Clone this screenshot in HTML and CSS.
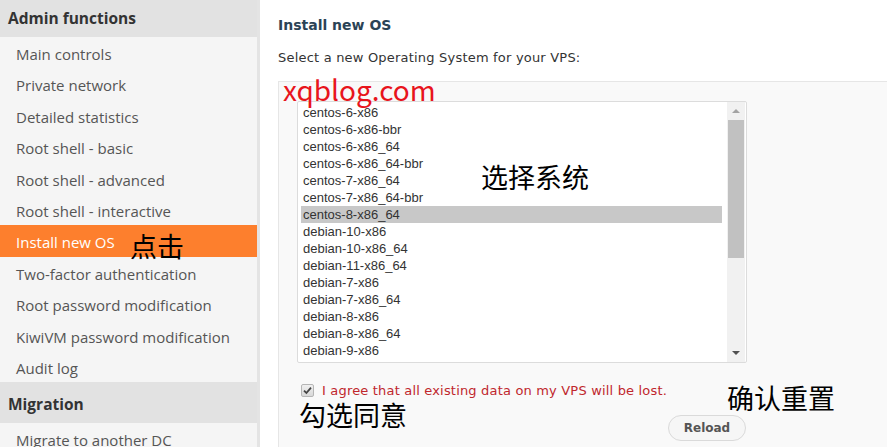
FILE: index.html
```html
<!DOCTYPE html>
<html>
<head>
<meta charset="utf-8">
<link rel="stylesheet" href="styles.css">
</head>
<body>
<div class="page">
  <aside class="sidebar">
    <div class="side-head">Admin functions</div>
    <ul class="side-list">
      <li>Main controls</li>
      <li>Private network</li>
      <li>Detailed statistics</li>
      <li>Root shell - basic</li>
      <li>Root shell - advanced</li>
      <li>Root shell - interactive</li>
      <li class="active">Install new OS<span class="note note-click">点击</span></li>
      <li>Two-factor authentication</li>
      <li>Root password modification</li>
      <li>KiwiVM password modification</li>
      <li>Audit log</li>
    </ul>
    <div class="side-head side-head2">Migration</div>
    <ul class="side-list">
      <li>Migrate to another DC</li>
    </ul>
  </aside>
  <main class="main">
    <h2 class="title">Install new OS</h2>
    <p class="lead">Select a new Operating System for your VPS:</p>
    <div class="panel">
      <span class="watermark">xqblog.com</span>
      <div class="listbox">
        <ul class="options">
          <li>centos-6-x86</li>
          <li>centos-6-x86-bbr</li>
          <li>centos-6-x86_64</li>
          <li>centos-6-x86_64-bbr</li>
          <li>centos-7-x86_64</li>
          <li>centos-7-x86_64-bbr</li>
          <li class="sel">centos-8-x86_64</li>
          <li>debian-10-x86</li>
          <li>debian-10-x86_64</li>
          <li>debian-11-x86_64</li>
          <li>debian-7-x86</li>
          <li>debian-7-x86_64</li>
          <li>debian-8-x86</li>
          <li>debian-8-x86_64</li>
          <li>debian-9-x86</li>
          <li>debian-9-x86_64</li>
          <li>fedora-27-x86_64</li>
          <li>ubuntu-14.04-x86</li>
          <li>ubuntu-14.04-x86_64</li>
          <li>ubuntu-16.04-x86_64</li>
          <li>ubuntu-18.04-x86_64</li>
          <li>ubuntu-20.04-x86_64</li>
        </ul>
        <div class="scrollbar">
          <div class="arrow arrow-up"></div>
          <div class="track"><div class="thumb"></div></div>
          <div class="arrow arrow-down"></div>
        </div>
        <span class="note note-select">选择系统</span>
      </div>
      <label class="agree">
        <span class="check"><svg width="9" height="9" viewBox="0 0 9 9"><path d="M1 4.6 L3.4 7 L8 1.6" fill="none" stroke="#444" stroke-width="1.8"/></svg></span>
        <span class="agree-text">I agree that all existing data on my VPS will be lost.</span>
      </label>
      <div class="bottom-row">
        <span class="note note-agree">勾选同意</span>
        <button class="reload">Reload<span class="note note-confirm">确认重置</span></button>
      </div>
    </div>
  </main>
</div>
</body>
</html>
```

FILE: styles.css
```css
* { box-sizing: border-box; }
html, body { margin: 0; padding: 0; background: #fff; }
body { width: 887px; height: 447px; overflow: hidden; }

.page { display: flex; height: 447px; }

.sidebar {
  width: 260px;
  flex: none;
  background: #f5f5f5;
  border-right: 3px solid #e4e4e4;
  font-family: "Open Sans", "Noto Sans", sans-serif;
}
.side-head {
  height: 37px;
  background: #e2e2e2;
  color: #333;
  font-weight: 700;
  font-size: 15.5px;
  padding: 7px 0 0 8px;
}
.side-head2 { height: 41px; padding-top: 11px; }
.side-list { list-style: none; margin: 0; padding: 0; }
.side-list li {
  position: relative;
  height: 31.4px;
  line-height: 31px;
  padding-left: 16px;
  padding-top: 2px;
  font-size: 15px;
  color: #555;
}
.side-list li.active { background: #fd7f2d; color: #fff; }

.note {
  position: absolute;
  font-family: "Noto Sans CJK SC", sans-serif;
  font-size: 27px;
  line-height: 1;
  color: #000;
  white-space: nowrap;
  font-weight: 400;
}
.note-click { left: 130px; top: 7px; }

.main {
  flex: 1;
  display: flex;
  flex-direction: column;
  padding-left: 18px;
  font-family: "DejaVu Sans", Verdana, sans-serif;
}
.title {
  margin: 0;
  padding-top: 17px;
  height: 50px;
  font-size: 14px;
  font-weight: 700;
  color: #2b4356;
}
.lead {
  margin: 0;
  height: 31px;
  font-size: 13px;
  color: #333;
  letter-spacing: 0.2px;
}
.panel {
  position: relative;
  flex: 1;
  background: #f9f9f9;
  border-top: 1px solid #e6e6e6;
  border-left: 1px solid #e6e6e6;
  padding: 19px 0 0 18px;
}
.watermark {
  position: absolute;
  z-index: 2;
  left: 4px;
  top: -7px;
  font-family: "Noto Sans CJK SC", "Noto Sans", sans-serif;
  font-size: 28px;
  line-height: 1;
  color: #e8141c;
}
.listbox {
  position: relative;
  width: 450px;
  height: 262px;
  background: #fff;
  border: 1px solid #dcdcdc;
  border-radius: 2px;
  display: flex;
  padding: 2px 1px 2px 3px;
  overflow: hidden;
}
.options {
  list-style: none;
  margin: 0;
  padding: 0;
  flex: 1;
  overflow: hidden;
  font-family: "Liberation Sans", Arial, sans-serif;
  font-size: 13px;
  color: #333;
}
.options li { height: 17px; line-height: 17px; padding-left: 2px; }
.options li.sel { background: #c8c8c8; }
.scrollbar {
  width: 18px;
  margin-left: 5px;
  margin-top: -2px;
  margin-bottom: -2px;
  background: #f1f1f1;
  display: flex;
  flex-direction: column;
}
.arrow { height: 18px; position: relative; }
.arrow::after {
  content: "";
  position: absolute;
  left: 5px;
  border-left: 4px solid transparent;
  border-right: 4px solid transparent;
}
.arrow-up::after { top: 7px; border-bottom: 4px solid #a3a3a3; }
.arrow-down::after { top: 7px; border-top: 4px solid #505050; }
.track { flex: 1; padding: 0 1px; }
.thumb { height: 138px; background: #c1c1c1; }
.note-select { left: 183px; top: 61px; }

.agree {
  display: flex;
  align-items: center;
  margin: 19px 0 0 4px;
  height: 16px;
}
.check {
  width: 13px;
  height: 13px;
  border: 1px solid #b5b5b5;
  border-radius: 2px;
  background: linear-gradient(#f0f0f0, #d8d8d8);
  display: flex;
  align-items: center;
  justify-content: center;
}
.agree-text {
  margin-left: 8px;
  margin-top: 1px;
  font-size: 13px;
  color: #c0272d;
  letter-spacing: 0.18px;
}
.bottom-row {
  position: relative;
  display: flex;
  justify-content: flex-end;
  width: 450px;
  margin-top: 17px;
}
.note-agree { left: 2px; top: -14px; }
.reload {
  position: relative;
  width: 78px;
  height: 26px;
  margin-right: 1px;
  border: 1px solid #dadada;
  border-radius: 13px;
  background: #f6f6f6;
  font-family: "DejaVu Sans", Verdana, sans-serif;
  font-weight: 700;
  font-size: 12px;
  color: #555;
  padding: 0;
}
.note-confirm { left: 58px; top: -32px; }
```
